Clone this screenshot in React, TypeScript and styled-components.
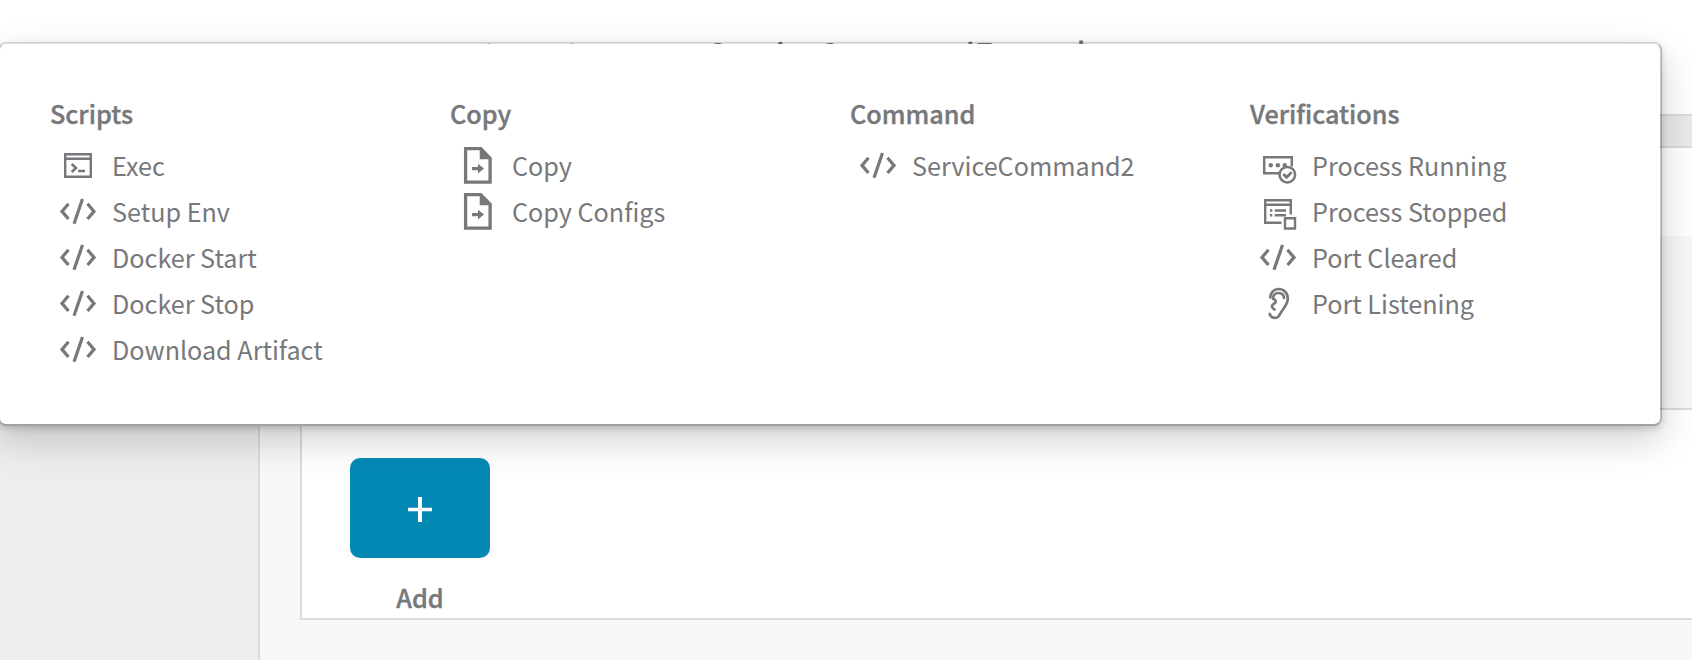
import React from "react";
import styled, { createGlobalStyle } from "styled-components";

const Global = createGlobalStyle`
  * { box-sizing: border-box; }
  body { margin: 0; overflow: hidden; background: #fff; color: #77787b;
    font-family: "Noto Sans CJK SC", "Noto Sans", sans-serif; }
`;

const Page = styled.div`
  height: 660px;
  display: flex;
  flex-direction: column;
  position: relative;
  overflow: hidden;
`;
const Header = styled.header`
  height: 114px;
  padding: 30px 0 0 443px;
  display: flex;
  align-items: baseline;
  flex: none;
  background: #fff;
  font-size: 31.5px;
  line-height: 44px;
  white-space: nowrap;
`;
const Crumb = styled.span`
  width: 265px;
  font-size: 29px;
  letter-spacing: -0.85px;
  color: #0aa5dc;
`;
const Title = styled.span`
  font-weight: 500;
`;
const Strip = styled.div`
  height: 34px;
  flex: none;
  background: #e9e9e9;
  border: solid #d9dada;
  border-width: 2px 0;
`;
const Body = styled.div`
  flex: 1;
  display: flex;
`;
const Sidebar = styled.aside`
  width: 260px;
  flex: none;
  background: #ededed;
  border-right: 2px solid #dadbdb;
`;
const Main = styled.main`
  flex: 1;
  background: #f7f7f7;
  padding-left: 40px;
`;
const Bar = styled.div`
  height: 88px;
  background: #fff;
`;
const Canvas = styled.section`
  margin-top: 172px;
  height: 212px;
  border: 2px solid #dadbdb;
  border-right: 0;
  background: #fff;
  padding: 48px;
`;
const AddBox = styled.div`
  width: 140px;
  display: flex;
  flex-direction: column;
  align-items: center;
  gap: 19px;
`;
const AddLabel = styled.span`
  font-size: 25.2px;
  font-weight: 500;
  line-height: 40px;
  -webkit-text-stroke: 0.4px #77787b;
`;
const AddButton = styled.button`
  width: 140px;
  height: 100px;
  padding: 3px 0 0;
  border: 0;
  border-radius: 10px;
  background: #0489b5;
  display: flex;
  align-items: center;
  justify-content: center;
`;
const Menu = styled.div`
  position: absolute;
  top: 42px;
  left: -2px;
  width: 1664px;
  height: 384px;
  display: flex;
  padding: 49px 10px 0 50px;
  background: #fff;
  background-clip: padding-box;
  border: 2px solid;
  border-color: rgba(0, 0, 0, 0.13) rgba(0, 0, 0, 0.21) #a0a1a5;
  border-radius: 8px;
  box-shadow: 0 14px 36px rgba(0, 0, 0, 0.19), 0 3px 6px rgba(0, 0, 0, 0.14);
`;
const Column = styled.div`
  width: 400px;
`;
const Heading = styled.div`
  height: 49px;
  line-height: 40px;
  font-size: 25.2px;
  font-weight: 500;
  -webkit-text-stroke: 0.4px #77787b;
`;
const Item = styled.div`
  height: 46px;
  display: flex;
  align-items: center;
  font-size: 25.17px;
  white-space: nowrap;
`;
const Glyph = styled.svg`
  width: 50px;
  height: 46px;
  margin: 2px 12px 0 0;
  flex: none;
  overflow: visible;
  fill: none;
  stroke: #77787b;
`;

type Kind = "exec" | "code" | "copy" | "running" | "stopped" | "ear";

const drawings: Record<Kind, React.ReactNode> = {
  exec: (
    <g strokeWidth="2.4">
      <path d="M15.200 11.200h25.600v22.600H15.200zM15 15.800h26" />
      <path strokeWidth="2.600" d="M21.700 21l4.300 4-4.300 4M28 28h7" />
    </g>
  ),
  code: <path strokeWidth="3.200" d="M18.500 14.800l-6.500 7.600 6.500 7.600M37.500 14.800l6.500 7.600-6.500 7.600M32.500 10L24 34.800" />,
  copy: (
    <>
      <path strokeWidth="3.300" d="M15.600 5.600h15.100l9.400 9.800v23.700H15.600z" />
      <path fill="#77787b" stroke="none" d="M29.700 4.500h1.500l10.300 10.500v1.300H29.700zM22 24h6v-3.200l6 4.800-6 4.800v-3.200h-6z" />
    </>
  ),
  running: (
    <g strokeWidth="2.500">
      <path d="M29.500 30.300H14.200V14.200h27.600v9.300" />
      <circle cx="37.300" cy="31.700" r="7.800" />
      <path strokeWidth="2.800" d="M33.300 31l3.300 3.300 5-5" />
      <g fill="#77787b" stroke="none"><circle cx="20.800" cy="22.300" r="2.200" /><circle cx="27.900" cy="22.300" r="2.200" /><circle cx="34.800" cy="22.300" r="2.200" /></g>
    </g>
  ),
  stopped: (
    <g strokeWidth="2.400">
      <path d="M31.500 33.800H15.200V11.200h25.600v14.300M15 15.800h26M20 21.500h2.300M24.700 21.500h11.300M20 26.200h2.300M24.700 26.200h11.300" />
      <path d="M35 29.200h10v10.300H35z" />
    </g>
  ),
  ear: (
    <g strokeWidth="2.700" strokeLinecap="round" strokeLinejoin="round">
      <path d="M20.300 16.500C20.500 11.500 24 8 28.500 8c5.500 0 9.300 4 9.300 9.500 0 4-2 7-4.500 10.500-2.300 3-3.300 5.500-4.800 7.300-2.500 2.700-7.500 2-8.800-2.300" />
      <path d="M34 17c-.2-3.300-2.500-5-5.500-5-3.500 0-5.800 2.500-5.500 5.800 1.300 0 3.300 1.800 2.500 3.500-.8 1.500-3.300 1.800-3.500 4-.1 2 1.500 2.300 2.500 3.200" />
    </g>
  ),
};

const columns: { title: string; items: [Kind, string][] }[] = [
  { title: "Scripts", items: [["exec", "Exec"], ["code", "Setup Env"], ["code", "Docker Start"], ["code", "Docker Stop"], ["code", "Download Artifact"]] },
  { title: "Copy", items: [["copy", "Copy"], ["copy", "Copy Configs"]] },
  { title: "Command", items: [["code", "ServiceCommand2"]] },
  { title: "Verifications", items: [["running", "Process Running"], ["stopped", "Process Stopped"], ["code", "Port Cleared"], ["ear", "Port Listening"]] },
];

export default function App() {
  return (
    <Page>
      <Global />
      <Header>
        <Crumb>main service</Crumb>
        <Title>ServiceCommandExample</Title>
      </Header>
      <Strip />
      <Body>
        <Sidebar />
        <Main>
          <Bar />
          <Canvas>
            <AddBox>
              <AddButton>
                <svg width="24" height="25" stroke="#fff"><path strokeWidth="4" d="M12 0v25" /><path strokeWidth="3.500" d="M0 12.500h24" /></svg>
              </AddButton>
              <AddLabel>Add</AddLabel>
            </AddBox>
          </Canvas>
        </Main>
      </Body>
      <Menu>
        {columns.map((c) => (
          <Column key={c.title}>
            <Heading>{c.title}</Heading>
            {c.items.map(([kind, label]) => (
              <Item key={label}>
                <Glyph viewBox="0 0 50 46">{drawings[kind]}</Glyph>
                {label}
              </Item>
            ))}
          </Column>
        ))}
      </Menu>
    </Page>
  );
}
